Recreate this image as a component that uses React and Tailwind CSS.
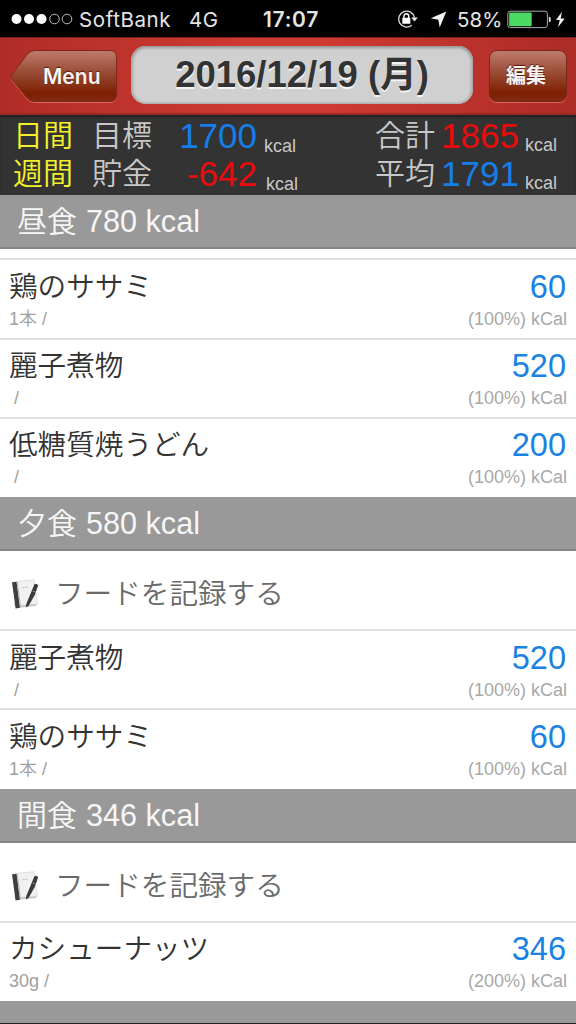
import React from 'react';

const sections = [
  {
    title: '昼食',
    total: 780,
    record: false,
    items: [
      { name: '鶏のササミ', note: '1本 /', kcal: 60, rate: 100, size: 'h-20 pt-2' },
      { name: '麗子煮物', note: ' /', kcal: 520, rate: 100, size: 'h-[79px] pt-[7px]' },
      { name: '低糖質焼うどん', note: ' /', kcal: 200, rate: 100, size: 'h-20 pt-[7px]' },
    ],
  },
  {
    title: '夕食',
    total: 580,
    record: true,
    items: [
      { name: '麗子煮物', note: ' /', kcal: 520, rate: 100, size: 'h-[79px] pt-2' },
      { name: '鶏のササミ', note: '1本 /', kcal: 60, rate: 100, size: 'h-[81px] pt-2' },
    ],
  },
  {
    title: '間食',
    total: 346,
    record: true,
    items: [
      { name: 'カシューナッツ', note: '30g /', kcal: 346, rate: 200, size: 'h-20 pt-[7px]' },
    ],
  },
];

function StatusBar() {
  return (
    <div className="flex h-[37px] items-center bg-black pl-[11px] font-['Inter',sans-serif] text-[21px] leading-[38px] text-[#e4e4e4]">
      <svg width="62" height="12" viewBox="0 0 62 12">
        <g fill="#fff">
          <circle cx="5.5" cy="6" r="5" />
          <circle cx="18" cy="6" r="5" />
          <circle cx="30.5" cy="6" r="5" />
        </g>
        <g fill="none" stroke="#bbb" strokeWidth="1">
          <circle cx="43.5" cy="6" r="4.8" />
          <circle cx="56" cy="6" r="4.8" />
        </g>
      </svg>
      <span className="ml-1.5 w-[110px] pt-0.5 text-[20.5px] tracking-[0.6px] whitespace-nowrap">SoftBank</span>
      <span className="w-[74px] pt-0.5 text-[20.5px] tracking-[0.5px]">4G</span>
      <span className="w-[134px] pt-0.5 font-semibold tracking-[0.7px]">17:07</span>
      {/* rotation lock */}
      <svg width="21" height="20" viewBox="0 0 21 20">
        <path d="M14.8 16.200A8 8 0 1 1 17.500 8.500" fill="none" stroke="#ddd" strokeWidth="1.3" />
        <path d="M14.2 8.500h6.600l-3.300 4z" fill="#eee" />
        <rect x="5.3" y="8.8" width="8" height="6" rx=".6" fill="#fff" />
        <path d="M6.9 9V7.2a2.4 2.4 0 0 1 4.800 0V9" fill="none" stroke="#fff" strokeWidth="1.4" />
      </svg>
      <svg className="mt-0.5 ml-3" width="17" height="17" viewBox="0 0 17 17">
        <path d="M16.3.5 9.7 16.5 8.3 8.7.7 7.3z" fill="#f2f2f2" />
      </svg>
      <span className="ml-2.5 w-[50px] pt-0.5 text-[20.5px] whitespace-nowrap">58%</span>
      <svg className="mt-0.5" width="58" height="19" viewBox="0 0 58 19">
        <rect x=".8" y="1.2" width="39.6" height="16.4" rx="2.5" fill="none" stroke="#aaa" />
        <rect x="2.2" y="2.6" width="22.5" height="13.6" rx="1" fill="#4cd964" />
        <path d="M41.8 6.5c1.8.4 2 1.2 2 2.9s-.2 2.5-2 2.9z" fill="#ddd" />
        <path d="M55 1.8 49 10.1h3.8l-1.8 7.1 6.7-8.7h-4z" fill="#f2f2f2" />
      </svg>
    </div>
  );
}

function NavBar() {
  return (
    <div className="flex h-[78px] items-start border-t border-[#7c2420] bg-[linear-gradient(90deg,#b02d27_0%,#d03a33_45%,#d03a33_55%,#ac2c26_100%)] pl-[9px] shadow-[inset_0_-2px_1px_#9b2a25]">
      <button className="relative mt-3 h-[53px] w-[109px]">
        <svg className="absolute inset-0" width="109" height="53" viewBox="0 0 109 53">
          <defs>
            <linearGradient id="back" x1="0" y1="0" x2="0" y2="1">
              <stop offset="0" stopColor="#be7c6c" />
              <stop offset=".5" stopColor="#94442c" />
              <stop offset=".85" stopColor="#7c2000" />
              <stop offset="1" stopColor="#852a12" />
            </linearGradient>
          </defs>
          <path d="M1 28 18 5.5Q21.5 1.5 26 1.5H101Q107.500 1.500 107.500 8V46Q107.500 52.500 101 52.500H26Q21.500 52.500 18 49Z" fill="none" stroke="#e0695f" />
          <path d="M1 27 18 4.500Q21.500.5 26 .5H101Q107.500.5 107.500 7V45Q107.500 51.500 101 51.500H26Q21.500 51.500 18 48Z" fill="url(#back)" stroke="#7a261c" />
        </svg>
        <span className="relative block pl-[34px] text-left font-['Inter','Liberation_Sans',sans-serif] text-[21px] leading-[49px] font-semibold text-[#f8f4f2] [text-shadow:0_-1px_1px_#5a1a0c]">Menu</span>
      </button>
      <div className="mt-2 ml-[13px] h-[58px] w-[342px] rounded-[15px] bg-[#d0d0d0] text-center text-[36.5px] leading-[57px] font-bold whitespace-nowrap text-[#333] shadow-[inset_0_2px_3px_#999,inset_2px_0_3px_#b0b0b0,inset_-2px_0_3px_#b0b0b0,inset_0_-1px_2px_#b0b0b0] [text-shadow:0_2px_0_#f5f5f5]">
        2016/12/19 (月)
      </div>
      <button className="mt-3 ml-4 h-[52px] w-[78px] rounded-[8px] border border-[#7a261c] bg-[linear-gradient(#be7c6c,#94442c_50%,#7c2000_85%,#852a12)] pr-1 text-center text-[20px] leading-[50px] font-bold text-[#f8f4f2] shadow-[0_1px_0_#df655b] [text-shadow:0_-1px_1px_#5a1a0c]">
        編集
      </button>
    </div>
  );
}

function Summary() {
  const rows = [
    ['日間', '目標', '1700', '合計', '1865'],
    ['週間', '貯金', '-642', '平均', '1791'],
  ];
  return (
    <div className="h-20 bg-[#333] pt-0.5 shadow-[inset_0_2px_2px_#222]">
      {rows.map(([span, label, left, label2, right], i) => (
        <div key={span} className="flex h-[37.5px] pl-[13px] text-[30px] leading-[38px] font-[350] whitespace-nowrap text-[#c8c8c8]">
          <span className="w-[79px] text-[#f4f02c]">{span}</span>
          <span className="w-[73px]">{label}</span>
          <span className={`w-[92px] text-right text-[35px] ${i === 0 ? 'text-[#157ee8]' : 'text-[#e80c0c]'}`}>{left}</span>
          <span className={`mt-[10px] w-[110px] text-[18px] ${i === 0 ? 'pl-[7px]' : 'pl-[9px]'}`}>kcal</span>
          <span className="ml-[8px] w-[66px]">{label2}</span>
          <span className={`w-[84px] text-[35px] ${i === 0 ? 'text-[#e80c0c]' : 'text-[#157ee8]'}`}>{right}</span>
          <span className="mt-[9px] text-[18px]">kcal</span>
        </div>
      ))}
    </div>
  );
}

function NotebookIcon() {
  return (
    <svg width="28" height="30" viewBox="0 0 28 30">
      <path d="m2 25 21-2 2 1-1 3-20 2z" fill="#c8c8c8" />
      <path d="M3.500 2.500 22 .8 25.500 25 7 26.500z" fill="#f1f1f1" stroke="#d0d0d0" strokeWidth=".6" />
      <path d="m0 3.300 4.600-.5L8 28.800l-4.400.7z" fill="#3f3f3f" />
      <path d="m4.600 2.800 1.200-.1L9 27.800l-1 1z" fill="#bcbcbc" />
      <path d="m10.500 8.700 5.500-.6" stroke="#bbb" strokeDasharray="2 1" />
      <path d="M22.400 5.200 24.400 4.800 26.200 6.200 22.800 16 16.500 27 14 28.400 14.300 25z" fill="#3a3a3a" />
      <path d="m20.800 12 2.800 1.200" stroke="#aaa" strokeWidth=".8" />
    </svg>
  );
}

function FoodRow({ item }) {
  return (
    <div className={`flex justify-between border-t-2 border-[#dfdfdf] bg-white pr-[9px] pl-[9px] ${item.size}`}>
      <div>
        <div className="text-[28.6px] leading-[39px] font-[350] text-[#333]">{item.name}</div>
        <div className="text-[18px] leading-[25px] font-[350] whitespace-pre text-[#a0a0a0]">{item.note}</div>
      </div>
      <div className="text-right">
        <div className="pr-px text-[32.5px] leading-[39px] text-[#1a82e2]">{item.kcal}</div>
        <div className="text-[18px] leading-[25px] text-[#a8a8a8]">({item.rate}%) kCal</div>
      </div>
    </div>
  );
}

function Section({ section }) {
  return (
    <div>
      <div className="flex h-[54px] border-b-2 border-[#858585] bg-[#999] pl-[17px] text-[30px] leading-[53px] font-[350] text-[#f6f6f6]">
        <span>{section.title}</span>
        <span className="pl-[9px] text-[30.6px]">{section.total} kcal</span>
      </div>
      {section.record ? (
        <div className="flex h-[78px] items-center bg-white pt-2 pl-3">
          <NotebookIcon />
          <span className="ml-[15px] text-[28.6px] leading-10 font-[350] text-[#6a6a6a]">フードを記録する</span>
        </div>
      ) : (
        <div className="h-[9px] bg-white" />
      )}
      {section.items.map((item, i) => (
        <FoodRow key={i} item={item} />
      ))}
    </div>
  );
}

function App() {
  return (
    <div className="h-[1024px] w-[576px] overflow-hidden bg-white font-['Liberation_Sans','Noto_Sans_CJK_JP',sans-serif]">
      <StatusBar />
      <NavBar />
      <Summary />
      {sections.map((section) => (
        <Section key={section.title} section={section} />
      ))}
      {/* next meal header, cut off by the screen edge */}
      <div className="h-[23px] border-b border-[#222] bg-[#999]" />
    </div>
  );
}

export default App;
